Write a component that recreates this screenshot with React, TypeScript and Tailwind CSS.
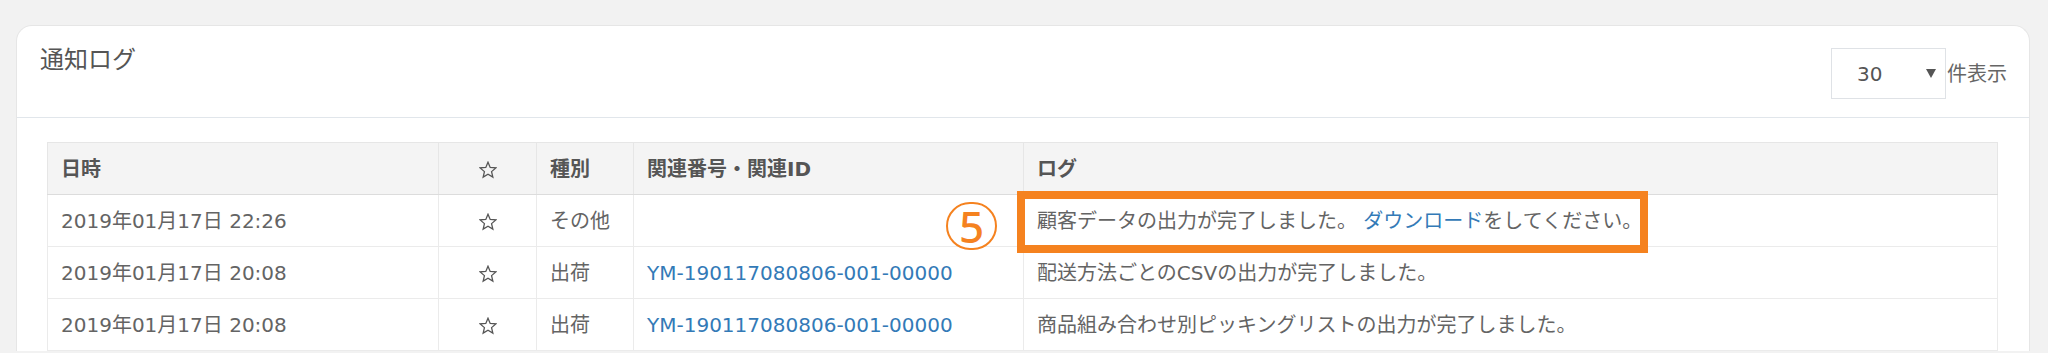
import React from "react";

type Row = {
  date: string;
  kind: string;
  ref: string;
  log: React.ReactNode;
};

const rows: Row[] = [
  {
    date: "2019年01月17日 22:26",
    kind: "その他",
    ref: "",
    log: (
      <>
        顧客データの出力が完了しました。 <span className="text-[#337ab7]">ダウンロード</span>をしてください。
      </>
    ),
  },
  {
    date: "2019年01月17日 20:08",
    kind: "出荷",
    ref: "YM-190117080806-001-00000",
    log: "配送方法ごとのCSVの出力が完了しました。",
  },
  {
    date: "2019年01月17日 20:08",
    kind: "出荷",
    ref: "YM-190117080806-001-00000",
    log: "商品組み合わせ別ピッキングリストの出力が完了しました。",
  },
];

function StarOutline() {
  return (
    <svg width="18" height="18" viewBox="0 0 24 24" className="inline-block">
      <polygon
        points="12,1.6 14.94,8.55 22.46,9.2 16.76,14.15 18.47,21.5 12,17.6 5.53,21.5 7.24,14.15 1.54,9.2 9.06,8.55"
        fill="none"
        stroke="#555"
        strokeWidth="1.7"
        strokeLinejoin="miter"
      />
    </svg>
  );
}

const font = "font-['DejaVu_Sans','Noto_Sans_CJK_JP',sans-serif]";

function App() {
  return (
    <div className={`h-[353px] w-full overflow-hidden bg-[#f2f2f2] pl-[16px] pr-[18px] pt-[25px] ${font}`}>
      <div className="rounded-t-[16px] border border-b-0 border-[#e6e6e6] bg-white">
        {/* Header */}
        <div className="flex h-[92px] items-start justify-between border-b border-[#e1e6eb] pl-[23px] pr-[22px]">
          <h1 className="mt-[20px] font-['Noto_Sans_CJK_JP',sans-serif] text-[24px] leading-[24px] font-normal text-[#555]">
            通知ログ
          </h1>
          <div className="mt-[22px] flex items-center">
            <div className="flex h-[51px] w-[115px] items-center justify-between border border-[#dfe2e6] pl-[25px] pr-[9px]">
              <span className="text-[20px] text-[#555]">30</span>
              <svg width="10" height="9" viewBox="0 0 10 9">
                <polygon points="0,0 10,0 5,9" fill="#555" />
              </svg>
            </div>
            <span className="ml-[1px] text-[20px] text-[#666]">件表示</span>
          </div>
        </div>

        {/* Table */}
        <div className="pl-[30px] pr-[31px] pt-[24px]">
          <div className="relative">
            <table className="w-full table-fixed border-collapse text-[20px] text-[#646464]">
              <colgroup>
                <col className="w-[391px]" />
                <col className="w-[98px]" />
                <col className="w-[97px]" />
                <col className="w-[390px]" />
                <col />
              </colgroup>
              <thead>
                <tr className="h-[52px] bg-[#f4f4f4] font-bold text-[#555]">
                  <th className="border border-[#e6e6e6] border-b-[#dcdcdc] px-[13px] text-left">日時</th>
                  <th className="border border-[#e6e6e6] border-b-[#dcdcdc] text-center">
                    <StarOutline />
                  </th>
                  <th className="border border-[#e6e6e6] border-b-[#dcdcdc] px-[13px] text-left">種別</th>
                  <th className="border border-[#e6e6e6] border-b-[#dcdcdc] px-[13px] text-left">関連番号・関連ID</th>
                  <th className="border border-[#e6e6e6] border-b-[#dcdcdc] px-[13px] text-left">ログ</th>
                </tr>
              </thead>
              <tbody>
                {rows.map((r, i) => (
                  <tr key={i} className="h-[52px]">
                    <td className="border border-[#ebebeb] px-[13px] whitespace-nowrap">{r.date}</td>
                    <td className="border border-[#ebebeb] text-center">
                      <StarOutline />
                    </td>
                    <td className="border border-[#ebebeb] px-[13px] whitespace-nowrap">{r.kind}</td>
                    <td className="border border-[#ebebeb] px-[13px] whitespace-nowrap text-[#337ab7]">{r.ref}</td>
                    <td className="border border-[#ebebeb] px-[13px] whitespace-nowrap">{r.log}</td>
                  </tr>
                ))}
              </tbody>
            </table>

            {/* Annotation: circled number */}
            <div className="absolute left-[899px] top-[60px] flex h-[48px] w-[51px] items-center justify-center rounded-full border-2 border-[#f5821f] bg-white">
              <span className="font-['Noto_Sans',sans-serif] text-[44px] leading-none font-medium text-[#f5821f]">5</span>
            </div>
            {/* Annotation: highlight box */}
            <div className="absolute left-[970px] top-[49px] h-[62px] w-[631px] border-[8px] border-[#f5821f]" />
          </div>
        </div>
      </div>
    </div>
  );
}

export default App;
